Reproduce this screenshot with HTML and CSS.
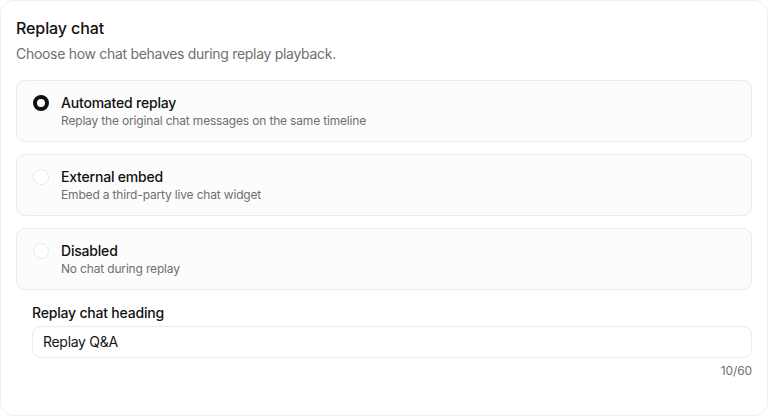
FILE: index.html
```html
<!DOCTYPE html>
<html lang="en">
<head>
<meta charset="utf-8">
<title>Replay chat</title>
<link rel="stylesheet" href="styles.css">
</head>
<body>
<section class="panel">
  <h2 class="title">Replay chat</h2>
  <p class="subtitle">Choose how chat behaves during replay playback.</p>
  <div class="options">
    <label class="option">
      <span class="radio checked"></span>
      <span class="option-text">
        <span class="option-title">Automated replay</span>
        <span class="option-desc">Replay the original chat messages on the same timeline</span>
      </span>
    </label>
    <label class="option">
      <span class="radio"></span>
      <span class="option-text">
        <span class="option-title">External embed</span>
        <span class="option-desc">Embed a third-party live chat widget</span>
      </span>
    </label>
    <label class="option">
      <span class="radio"></span>
      <span class="option-text">
        <span class="option-title">Disabled</span>
        <span class="option-desc">No chat during replay</span>
      </span>
    </label>
  </div>
  <div class="field">
    <div class="field-label">Replay chat heading</div>
    <div class="input">Replay Q&amp;A</div>
    <div class="counter">10/60</div>
  </div>
</section>
</body>
</html>
```
FILE: styles.css
```css
* { box-sizing: border-box; }
html, body { margin: 0; padding: 0; background: #ffffff; }
body {
  font-family: Inter, "Noto Sans", "Liberation Sans", sans-serif;
  color: #141414;
  width: 768px;
  height: 416px;
  overflow: hidden;
}
.panel {
  width: 768px;
  height: 416px;
  border: 1px solid #efefef;
  border-radius: 14px;
  background: #ffffff;
  padding: 15px 15px 0 15px;
}
.title {
  margin: 0;
  font-size: 16px;
  line-height: 24px;
  font-weight: 500;
  color: #111111;
  letter-spacing: -0.1px;
}
.subtitle {
  margin: 4px 0 0 0;
  font-size: 14px;
  line-height: 20px;
  color: #6f6f6f;
  letter-spacing: -0.3px;
}
.options {
  margin-top: 16px;
  display: flex;
  flex-direction: column;
  gap: 12px;
}
.option {
  display: flex;
  align-items: flex-start;
  gap: 12px;
  border: 1px solid #ebebeb;
  border-radius: 9px;
  background: #fcfcfc;
  padding: 12px 16px;
  height: 62px;
}
.radio {
  flex: none;
  width: 16px;
  height: 16px;
  margin-top: 2px;
  border-radius: 50%;
  border: 1px solid #e8e8e8;
  background: #ffffff;
}
.radio.checked {
  border: 4px solid #111111;
}
.option-text {
  display: flex;
  flex-direction: column;
}
.option-title {
  font-size: 14px;
  line-height: 20px;
  font-weight: 500;
  color: #111111;
  letter-spacing: -0.2px;
}
.option-desc {
  font-size: 12px;
  line-height: 16px;
  color: #6f6f6f;
  letter-spacing: -0.17px;
}
.field {
  padding: 13px 0 0 16px;
  display: flex;
  flex-direction: column;
}
.field-label {
  font-size: 14px;
  line-height: 20px;
  font-weight: 500;
  color: #111111;
  letter-spacing: -0.2px;
}
.input {
  margin-top: 3px;
  height: 32px;
  border: 1px solid #ebebeb;
  border-radius: 9px;
  background: #ffffff;
  padding: 0 10px;
  font-size: 14px;
  line-height: 30px;
  color: #141414;
  letter-spacing: -0.3px;
}
.counter {
  margin-top: 5px;
  text-align: right;
  font-size: 12px;
  line-height: 16px;
  color: #6f6f6f;
  letter-spacing: -0.1px;
}
```
